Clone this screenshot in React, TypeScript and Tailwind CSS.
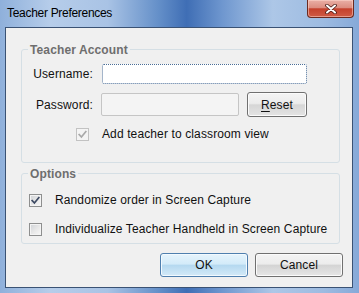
import React from "react";

function Check({ color }: { color: string }) {
  return (
    <svg width="11" height="11" viewBox="0 0 11 11" className="block">
      <path d="M2.2 5.6 L4.4 8 L8.8 2.6" fill="none" stroke={color} strokeWidth="1.7" strokeLinecap="square" />
    </svg>
  );
}

function Box({ checked, disabled }: { checked?: boolean; disabled?: boolean }) {
  if (disabled) {
    return (
      <div className="w-[13px] h-[13px] shrink-0 border border-[#c2c2c2] bg-[#f4f4f4] flex items-center justify-center">
        {checked && <Check color="#a9a9a9" />}
      </div>
    );
  }
  return (
    <div className="w-[13px] h-[13px] shrink-0 border border-[#8e8f8f] bg-[linear-gradient(135deg,#cfd2d6_0%,#e9e9e9_55%,#f7f7f7_100%)] shadow-[inset_0_0_0_1px_#f4f4f4] flex items-center justify-center">
      {checked && <Check color="#3d4a63" />}
    </div>
  );
}

export default function App() {
  return (
    <div className="w-[359px] h-[293px] relative flex flex-col overflow-hidden bg-[linear-gradient(90deg,#8fb0db_0%,#b6cdea_14%,#a9c3e5_30%,#6590c9_44%,#3f6eb5_52%,#6f97cf_62%,#adc7e7_76%,#9dbbe1_90%,#86a9d8_100%)] font-['Liberation_Sans',Arial,sans-serif] text-[12px] text-[#111] tracking-[0.12px]">
      {/* title bar */}
      <div className="h-[27px] shrink-0 pl-[7px] pt-[6px] leading-[14px] tracking-[-0.3px] text-black">
        Teacher Preferences
      </div>
      <div className="absolute top-0 right-[5px] w-[47px] h-[18px] rounded-b-[4px] border border-t-0 border-[#6b2a20] bg-[linear-gradient(180deg,#eab0a6_0%,#dc8d80_45%,#c5412c_52%,#cf5b45_100%)] shadow-[inset_0_0_0_1px_rgba(255,220,210,0.5)] flex items-center justify-center">
        <svg width="12" height="10" viewBox="0 0 12 10" className="block">
          <path d="M2 1.5 L10 8.5 M10 1.5 L2 8.5" stroke="#4a1a14" strokeWidth="3.6" strokeLinecap="round" />
          <path d="M2 1.5 L10 8.5 M10 1.5 L2 8.5" stroke="#ffffff" strokeWidth="2" strokeLinecap="round" />
        </svg>
      </div>

      {/* client */}
      <div className="ml-[5px] mr-[6px] h-[261px] border border-[#3a5274] bg-[#f0f0f0] flex flex-col pt-[21px]">
        {/* Teacher Account */}
        <div className="ml-[15px] mr-[12px] border border-[#d5dfe5] rounded-[3px] flex flex-col pb-[21px]">
          <span className="-mt-[7px] ml-[6px] px-[2px] w-fit bg-[#f0f0f0] font-bold text-[#6e6e6e] leading-[14px]">
            Teacher Account
          </span>
          <div className="pl-[9px] flex flex-col">
            <div className="mt-[7px] h-[20px] flex items-center">
              <span className="w-[62px] text-right">Username:</span>
              <div className="ml-[9px] w-[205px] h-[20px] rounded-[2px] border border-dotted border-[#4a6d96] bg-white" />
            </div>
            <div className="mt-[8px] h-[25px] flex items-center">
              <span className="w-[62px] text-right">Password:</span>
              <div className="ml-[8px] w-[138px] h-[23px] rounded-[2px] border border-[#c5c5c5] bg-[#f4f4f4]" />
              <div className="ml-[8px] w-[60px] h-[25px] rounded-[3px] border border-[#707070] bg-[linear-gradient(180deg,#f4f4f4_0%,#ececec_45%,#d6d6d6_52%,#e4e4e4_100%)] shadow-[inset_0_0_0_1px_#fbfbfb] flex items-center justify-center">
                <span><span className="underline underline-offset-2">R</span>eset</span>
              </div>
            </div>
            <div className="mt-[10px] h-[14px] flex items-center">
              <div className="ml-[45px]"><Box checked disabled /></div>
              <span className="ml-[13px]">Add teacher to classroom view</span>
            </div>
          </div>
        </div>

        {/* Options */}
        <div className="mt-[10px] ml-[15px] mr-[12px] border border-[#d5dfe5] rounded-[3px] flex flex-col pb-[7px]">
          <span className="-mt-[7px] ml-[6px] px-[2px] w-fit bg-[#f0f0f0] font-bold text-[#6e6e6e] leading-[14px]">
            Options
          </span>
          <div className="mt-[12px] h-[14px] flex items-center">
            <div className="ml-[7px]"><Box checked /></div>
            <span className="ml-[13px]">Randomize order in Screen Capture</span>
          </div>
          <div className="mt-[15px] h-[14px] flex items-center">
            <div className="ml-[7px]"><Box /></div>
            <span className="ml-[13px]">Individualize Teacher Handheld in Screen Capture</span>
          </div>
        </div>

        {/* buttons */}
        <div className="mt-[9px] pr-[9px] flex justify-end gap-[7px]">
          <div className="w-[88px] h-[24px] rounded-[3px] border border-[#4f7fae] bg-[linear-gradient(180deg,#e6f4fc_0%,#d3ebf9_45%,#b5d9f0_52%,#d4eaf8_100%)] shadow-[inset_0_0_0_1px_#f2faff] flex items-center justify-center">
            OK
          </div>
          <div className="w-[88px] h-[24px] rounded-[3px] border border-[#707070] bg-[linear-gradient(180deg,#f4f4f4_0%,#ececec_45%,#d4d4d4_52%,#e6e6e6_100%)] shadow-[inset_0_0_0_1px_#fbfbfb] flex items-center justify-center">
            Cancel
          </div>
        </div>
      </div>
    </div>
  );
}
